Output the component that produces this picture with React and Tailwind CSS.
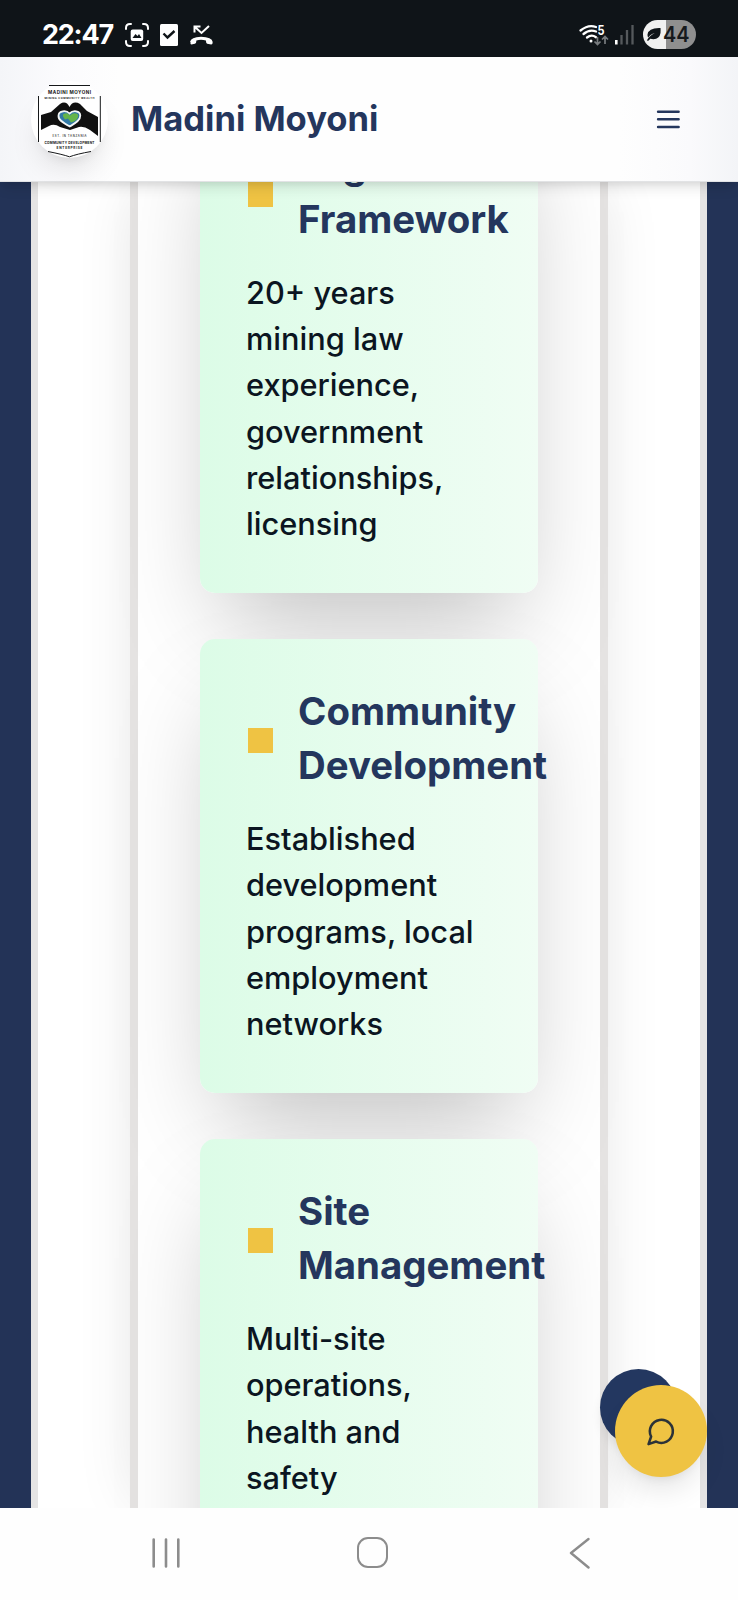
const cards = [
  {
    title: ["Legal", "Framework"],
    lines: ["20+ years", "mining law", "experience,", "government", "relationships,", "licensing"],
  },
  {
    title: ["Community", "Development"],
    lines: ["Established", "development", "programs, local", "employment", "networks"],
  },
  {
    title: ["Site", "Management"],
    lines: ["Multi-site", "operations,", "health and", "safety"],
  },
];

function StatusBar() {
  return (
    <div className="flex h-[57px] shrink-0 items-start bg-[#0f1418] pl-[42px] pr-[42px] pt-[20px] text-white">
      <div className="w-[82px] text-[27px] font-bold leading-[30px] tracking-[-1.200px]">22:47</div>
      <svg className="mt-[2px] h-[26px] w-[90px]" viewBox="124 22 90 26" fill="none">
        <g stroke="#fff" strokeWidth="2" strokeLinecap="round">
          <path d="M126 29v-1q0-4 4-4h1M143 24h1q4 0 4 4v1M148 41v1q0 4-4 4h-1M131 46h-1q-4 0-4-4v-1" />
        </g>
        <rect x="130.700" y="29.500" width="12.500" height="11.500" rx="2" fill="#fff" />
        <path d="M132.500 38l3-4 2 2 1.500-2 2.500 4z" fill="#0f1418" />
        <rect x="160" y="24" width="18" height="22" rx="1.500" fill="#fff" />
        <path d="M163.500 33.500l4 4 7-6.500" stroke="#0f1418" strokeWidth="2.400" />
        <path d="M194.500 32.500v-6h6M195 27l6.500 6 7.500-7" stroke="#fff" strokeWidth="2" />
        <path d="M190 42q1-5 11-5.200Q212 37 212.700 42q0 2.500-1.500 2.500l-4-.7q-1.200-.3-1.300-3.300-5-1.500-9.500 0 0 3-1.500 3.300l-3.500.7q-1.300 0-.9-2.500z" fill="#fff" />
      </svg>
      <svg className="ml-auto h-[30px] w-[118px]" viewBox="578 20 118 30" fill="none">
        <g stroke="#fff" strokeWidth="2.300" strokeLinecap="round">
          <path d="M580.500 30.500q8-6.500 15.500-3.500" />
          <path d="M583.500 34q6-5 12.500-2.500" />
          <path d="M587 37.500q4.500-3.500 9-.3" />
        </g>
        <circle cx="591" cy="41" r="1.500" fill="#fff" />
        <text x="597.500" y="34.500" fontSize="12.500" fontWeight="700" fill="#fff" textLength="7" lengthAdjust="spacingAndGlyphs">5</text>
        <path d="M597.500 37v7.500m-3-3l3 3 3-3M605 44v-7.500m-3 3l3-3 3 3" stroke="#777b7e" strokeWidth="1.700" />
        <path d="M616.300 40v4.500" stroke="#fff" strokeWidth="2.600" />
        <path d="M621.500 35v9.500M627 30v14.500M632.500 25v19.500" stroke="#55595c" strokeWidth="2.300" />
        <path d="M657.500 20a14.500 14.500 0 0 0 0 29h8.500v-29z" fill="#f1f1f1" />
        <path d="M666 20h15.500a14.500 14.500 0 0 1 0 29H666z" fill="#8f8f8f" />
        <path d="M660.500 28q-12-.5-13 6.500-.2 2 .8 3 2-3.500 6.500-4.500-5.500 2.500-8 7.500l1.500.3 2-2q9 1.800 10.200-5.800.2-3.500 0-5z" fill="#0f1418" />
        <text x="663" y="42" fontSize="22" fontWeight="600" fill="#16191c" textLength="26.500" lengthAdjust="spacingAndGlyphs">44</text>
      </svg>
    </div>
  );
}

function Logo() {
  return (
    <div className="size-[77px] rounded-full bg-white shadow-[0_19px_29px_-6px_rgba(0,0,0,0.1),0_8px_12px_-8px_rgba(0,0,0,0.1)]">
      <svg className="size-[77px]" viewBox="31 81 77 77" fill="none">
        <path d="M49 85.500h41M38.500 96v46M100.300 96v46M48 151.500q15 3 21.500 5.300Q77 154 91 151.500" stroke="#16181a" strokeWidth="1" />
        <g fill="#161616" textAnchor="middle" fontWeight="700">
          <text x="69.500" y="94.300" fontSize="4.600" textLength="43">MADINI MOYONI</text>
          <text x="69.500" y="99.200" fontSize="2.600" textLength="50">MINING COMMUNITY WEALTH</text>
          <text x="69.500" y="136.800" fontSize="2.800" fontWeight="500" textLength="34">EST. IN TANZANIA</text>
          <text x="69.500" y="144.200" fontSize="3.200" textLength="50">COMMUNITY DEVELOPMENT</text>
          <text x="69.500" y="148.500" fontSize="3.200" textLength="26">ENTERPRISE</text>
        </g>
        <path d="M41 115L51 112L60 104Q66 100 69.500 107Q73 100 80 104L87 111L98 117V136L90 130Q84 126 79 127L70 130L60 127Q54 123 49 126L41 130Z" fill="#101010" />
        <path d="M69.800 126.500C63 123 58 120 58.500 115.500c.3-5 8-5.500 11-2 3.500-3.500 10.500-3 10.800 2 .2 5-5.500 8-10.500 11z" fill="#3279a5" stroke="#f4f7f7" strokeWidth="1.800" />
        <path d="M63 114.500q4-3 7 1 4-4 8-1 1 4-4 7l-3 1-3-4-3 1-2-3z" fill="#65b54a" />
      </svg>
    </div>
  );
}

function Header() {
  return (
    <header className="relative z-10 flex h-[125px] shrink-0 items-center border-b border-[#e2e3e5] bg-[linear-gradient(90deg,#f4f5f8_0,#fbfbfd_60px,#fefefe_120px,#fefefe_620px,#fafafc_690px,#f3f4f7_738px)] pl-[31px] pr-[54px] shadow-[0_8px_12px_-2px_rgba(0,0,0,0.1),0_4px_8px_-4px_rgba(0,0,0,0.1)]">
      <Logo />
      <h1 className="ml-[23px] whitespace-nowrap text-[34.560px] font-bold leading-[54px] text-[#24365d]">Madini Moyoni</h1>
      <svg className="ml-auto mt-px size-[30.700px]" viewBox="0 0 24 24" fill="none" stroke="#24365d" strokeWidth="2" strokeLinecap="round">
        <path d="M4 6h16M4 12h16M4 18h16" />
      </svg>
    </header>
  );
}

function Card({ title, lines }) {
  return (
    <article className="min-h-[454px] shrink-0 rounded-[15px] bg-linear-to-r from-[#dcfce7] to-[#f0fdf4] px-[46px] pb-[46px] pt-[45px] shadow-[0_48px_96px_-23px_rgba(0,0,0,0.25)]">
      <div className="mb-[24px] flex items-center">
        <span className="ml-[2px] mr-[25px] mt-[5px] size-[25px] shrink-0 bg-[#efc343]" />
        <h3 className="whitespace-nowrap text-[38.400px] font-bold leading-[54px] text-[#24365d]">
          {title.map((line) => (
            <span key={line} className="block">{line}</span>
          ))}
        </h3>
      </div>
      <p className="whitespace-nowrap text-[30.720px] font-medium leading-[46.200px] text-[#0b1521]">
        {lines.map((line) => (
          <span key={line} className="block">{line}</span>
        ))}
      </p>
    </article>
  );
}

export default function App() {
  return (
    <div className="relative flex h-[1600px] w-[738px] flex-col overflow-hidden bg-white font-[Inter,sans-serif]">
      <StatusBar />
      <Header />
      <main className="flex min-h-0 flex-1 overflow-hidden bg-[#233357] px-[31px]">
        <div className="flex w-full border-x-[7px] border-[#e5e4e4] bg-white px-[92px]">
          <div className="w-full border-x-[8px] border-[#e5e3e2] bg-white px-[62px] shadow-[0_0_60px_-10px_rgba(0,0,0,0.12)]">
            <div className="-mt-[89px] flex flex-col gap-[46px]">
              {cards.map((card) => (
                <Card key={card.title[1]} {...card} />
              ))}
            </div>
          </div>
        </div>
      </main>
      <div className="absolute left-[600px] top-[1369px] size-[77px] rounded-full bg-[#233760] shadow-[0_8px_12px_-2px_rgba(0,0,0,0.1)]" />
      <button className="absolute left-[615px] top-[1385px] flex size-[92px] items-center justify-center rounded-full bg-[#efc343] shadow-[0_19px_29px_-6px_rgba(0,0,0,0.1),0_8px_12px_-8px_rgba(0,0,0,0.1)]">
        <svg className="size-[30.700px]" viewBox="0 0 24 24" fill="none" stroke="#2b3238" strokeWidth="2" strokeLinecap="round" strokeLinejoin="round">
          <path d="M7.900 20A9 9 0 1 0 4 16.100L2 22Z" />
        </svg>
      </button>
      <nav className="relative flex h-[92px] shrink-0 items-center justify-between bg-[#fefefe] pb-[3px] pl-[151px] pr-[147px]">
        <svg className="h-[32px] w-[31px]" viewBox="0 0 31 32" stroke="#8c8c8c" strokeWidth="2.600" strokeLinecap="round">
          <path d="M2.700 2.500v27M15 2.500v27M27.300 2.500v27" />
        </svg>
        <div className="mr-[7px] size-[31px] rounded-[11px] border-2 border-[#8c8c8c]" />
        <svg className="h-[32px] w-[22px]" viewBox="0 0 22 32" fill="none" stroke="#8c8c8c" strokeWidth="2.400" strokeLinecap="round" strokeLinejoin="round">
          <path d="M19.500 2L2 16l17.500 14.500" />
        </svg>
      </nav>
    </div>
  );
}
